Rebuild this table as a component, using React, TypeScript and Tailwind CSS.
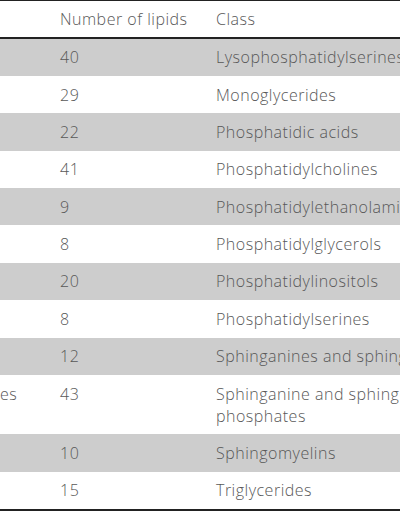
import React from 'react';

const rows: { cat?: string; n: string; cls: string }[] = [
  { n: '40', cls: 'Lysophosphatidylserines' },
  { n: '29', cls: 'Monoglycerides' },
  { n: '22', cls: 'Phosphatidic acids' },
  { n: '41', cls: 'Phosphatidylcholines' },
  { n: '9', cls: 'Phosphatidylethanolamines' },
  { n: '8', cls: 'Phosphatidylglycerols' },
  { n: '20', cls: 'Phosphatidylinositols' },
  { n: '8', cls: 'Phosphatidylserines' },
  { n: '12', cls: 'Sphinganines and sphingosines' },
  { cat: 'es', n: '43', cls: 'Sphinganine and sphingoid base phosphates' },
  { n: '10', cls: 'Sphingomyelins' },
  { n: '15', cls: 'Triglycerides' },
];

export default function App() {
  return (
    <div className="w-[400px] h-[516px] overflow-hidden bg-white font-['Open_Sans',sans-serif] font-light text-[16px] tracking-[0.5px] text-[#585858]">
      <table className="w-[530px] border-collapse table-fixed border-t border-t-[#222] border-b-2 border-b-[#222]">
        <colgroup>
          <col className="w-[60px]" />
          <col className="w-[156px]" />
          <col className="w-[314px]" />
        </colgroup>
        <thead>
          <tr className="h-[37px] border-b-2 border-b-[#222]">
            <th className="p-0 font-light text-left"></th>
            <th className="p-0 font-light text-left">Number of lipids</th>
            <th className="p-0 font-light text-left">Class</th>
          </tr>
        </thead>
        <tbody>
          {rows.map((r, i) => (
            <tr key={i} className={i % 2 === 0 ? 'bg-[#cdcdcd]' : 'bg-white'}>
              <td className="py-[7.7px] px-0 leading-[22px] align-top">{r.cat ?? ''}</td>
              <td className="py-[7.7px] px-0 leading-[22px] align-top">{r.n}</td>
              <td className="py-[7.7px] pl-0 pr-4 leading-[22px] align-top">{r.cls}</td>
            </tr>
          ))}
        </tbody>
      </table>
    </div>
  );
}
